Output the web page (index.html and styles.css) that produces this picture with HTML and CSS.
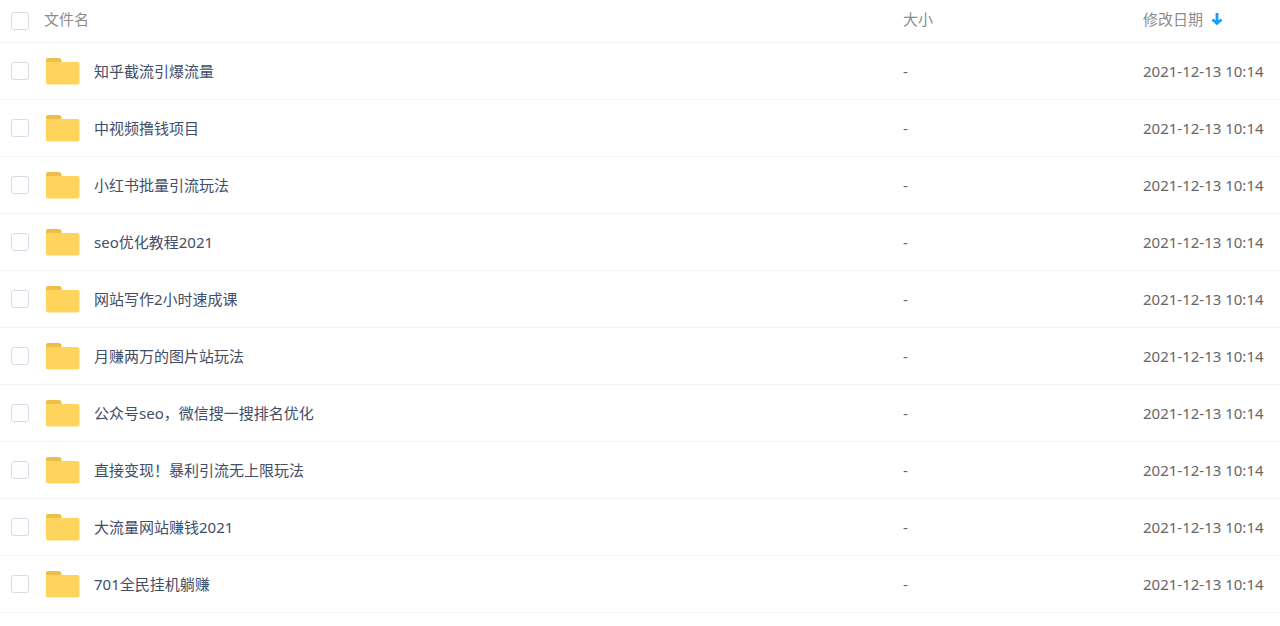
FILE: index.html
```html
<!DOCTYPE html>
<html lang="zh-CN">
<head>
<meta charset="utf-8">
<meta name="viewport" content="width=device-width, initial-scale=1">
<title>文件列表</title>
<link rel="stylesheet" href="styles.css">
</head>
<body>
<svg class="sprite" aria-hidden="true">
  <symbol id="folder" viewBox="0 0 34 28">
    <path d="M0 8V3Q0 1 2 1H13Q15 1 15.500 3V8Z" fill="#edbf4a"/>
    <path d="M0 5H31.500Q33.500 5 33.500 7V25.500Q33.500 27.500 31.500 27.500H2Q0 27.500 0 25.500Z" fill="#ffd45c"/>
  </symbol>
</svg>
<table class="files">
  <colgroup><col class="col-check"><col><col class="col-size"><col class="col-date"></colgroup>
  <thead>
    <tr>
      <th class="check"><input class="box" type="checkbox" aria-label="全选"></th>
      <th scope="col">文件名</th>
      <th scope="col">大小</th>
      <th scope="col" aria-sort="descending"><button class="sort" type="button">修改日期
        <svg class="arrow" viewBox="0 0 12 14" aria-hidden="true"><path d="M6 1V11M1.500 7.500L6 11.500L10.500 7.500" fill="none" stroke="#149fff" stroke-width="2.800"/></svg></button></th>
    </tr>
  </thead>
  <tbody>
    <tr><td class="check"><input class="box" type="checkbox" id="f1"></td><td><label class="name" for="f1"><svg class="folder"><use href="#folder"/></svg>知乎截流引爆流量</label></td><td>-</td><td>2021-12-13 10:14</td></tr>
    <tr><td class="check"><input class="box" type="checkbox" id="f2"></td><td><label class="name" for="f2"><svg class="folder"><use href="#folder"/></svg>中视频撸钱项目</label></td><td>-</td><td>2021-12-13 10:14</td></tr>
    <tr><td class="check"><input class="box" type="checkbox" id="f3"></td><td><label class="name" for="f3"><svg class="folder"><use href="#folder"/></svg>小红书批量引流玩法</label></td><td>-</td><td>2021-12-13 10:14</td></tr>
    <tr><td class="check"><input class="box" type="checkbox" id="f4"></td><td><label class="name" for="f4"><svg class="folder"><use href="#folder"/></svg>seo优化教程2021</label></td><td>-</td><td>2021-12-13 10:14</td></tr>
    <tr><td class="check"><input class="box" type="checkbox" id="f5"></td><td><label class="name" for="f5"><svg class="folder"><use href="#folder"/></svg>网站写作2小时速成课</label></td><td>-</td><td>2021-12-13 10:14</td></tr>
    <tr><td class="check"><input class="box" type="checkbox" id="f6"></td><td><label class="name" for="f6"><svg class="folder"><use href="#folder"/></svg>月赚两万的图片站玩法</label></td><td>-</td><td>2021-12-13 10:14</td></tr>
    <tr><td class="check"><input class="box" type="checkbox" id="f7"></td><td><label class="name" for="f7"><svg class="folder"><use href="#folder"/></svg>公众号seo，微信搜一搜排名优化</label></td><td>-</td><td>2021-12-13 10:14</td></tr>
    <tr><td class="check"><input class="box" type="checkbox" id="f8"></td><td><label class="name" for="f8"><svg class="folder"><use href="#folder"/></svg>直接变现！暴利引流无上限玩法</label></td><td>-</td><td>2021-12-13 10:14</td></tr>
    <tr><td class="check"><input class="box" type="checkbox" id="f9"></td><td><label class="name" for="f9"><svg class="folder"><use href="#folder"/></svg>大流量网站赚钱2021</label></td><td>-</td><td>2021-12-13 10:14</td></tr>
    <tr><td class="check"><input class="box" type="checkbox" id="f10"></td><td><label class="name" for="f10"><svg class="folder"><use href="#folder"/></svg>701全民挂机躺赚</label></td><td>-</td><td>2021-12-13 10:14</td></tr>
  </tbody>
</table>
</body>
</html>
```
FILE: styles.css
```css
body {
  margin: 0;
  background: #fff;
  color: #666;
  font: 15px/20px "Noto Sans", "Noto Sans CJK SC", sans-serif;
}

.sprite {
  display: none;
}

.files {
  width: 100%;
  table-layout: fixed;
  border-collapse: separate;
  border-spacing: 0;
}

.col-check {
  width: 44px;
}

.col-size {
  width: 240px;
}

.col-date {
  width: 137px;
}

.files th,
.files td {
  box-sizing: border-box;
  height: 57px;
  padding: 0;
  border-bottom: 1px solid #f3f4fa;
  text-align: left;
  vertical-align: middle;
  white-space: nowrap;
}

.files th {
  height: 43px;
  padding-bottom: 4px;
  color: #8c8c8c;
  font-weight: 400;
}

.files .check {
  padding: 0 0 0 11px;
}

.box {
  appearance: none;
  display: block;
  box-sizing: border-box;
  width: 18px;
  height: 18px;
  margin: 0;
  border: 1px solid #d6dce6;
  border-radius: 3px;
  background: #fff;
}

.box:checked {
  border-color: #149fff;
  background: #149fff;
}

.name {
  display: flex;
  align-items: center;
  gap: 14px;
  padding-left: 2px;
  color: #424e67;
}

.folder {
  flex: none;
  width: 34px;
  height: 28px;
}

.sort {
  display: flex;
  align-items: center;
  gap: 8px;
  padding: 0;
  border: 0;
  background: none;
  color: inherit;
  font: inherit;
}

.arrow {
  width: 12px;
  height: 14px;
}
```
